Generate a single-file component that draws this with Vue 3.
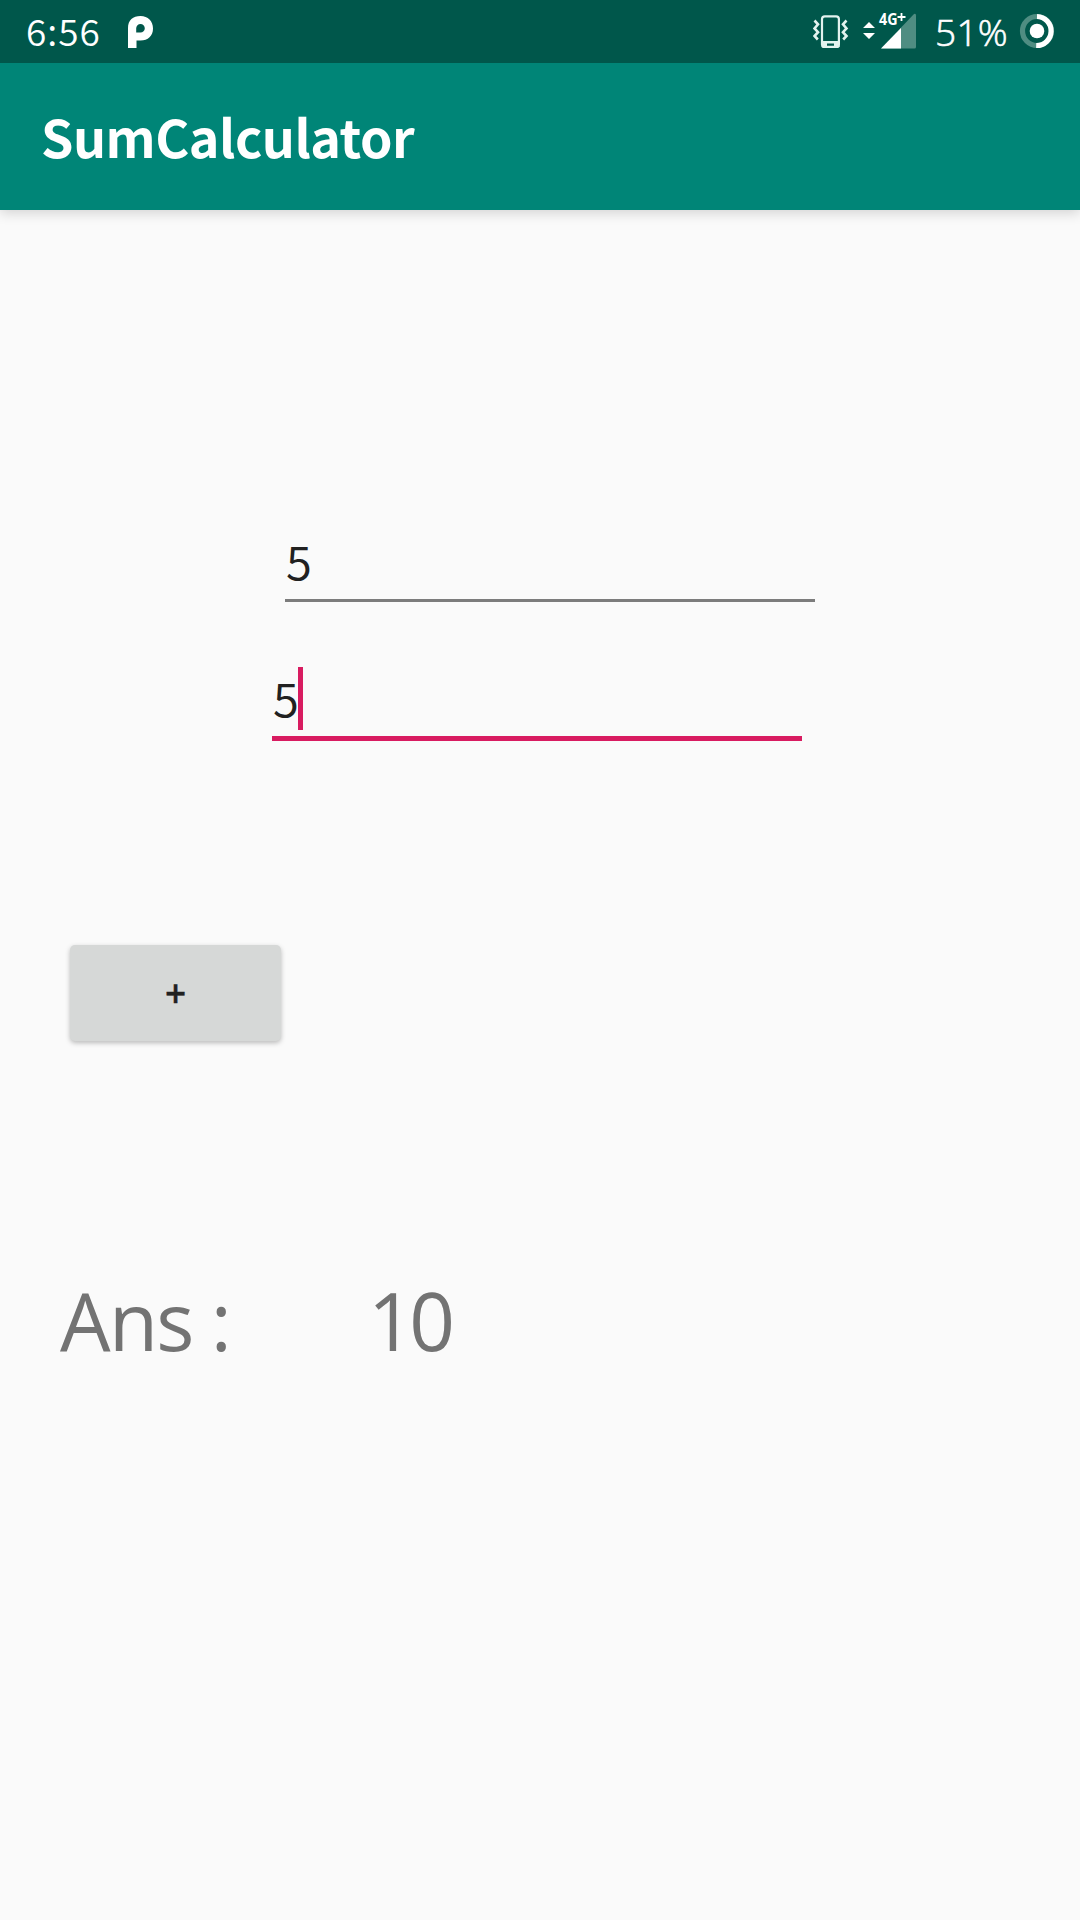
<script setup>
import { ref } from 'vue'

const time = ref('6:56')
const battery = ref('51%')
const first = ref('5')
const second = ref('5')
const answer = ref('10')
</script>

<template>
  <div class="screen">
    <header class="status">
      <span class="time">{{ time }}</span>
      <svg class="pinned" width="26" height="34" viewBox="0 0 26 34">
        <path fill="#fff" fill-rule="evenodd" d="M0 33V13C0 5 5 1 12.500 1S25 6 25 13.500 20 25.500 12.500 25.500H8.500V33ZM12.500 9A4.300 4.300 0 0 0 8.200 13.300V17.600H12.500A4.300 4.300 0 0 0 12.500 9Z" />
      </svg>
      <svg class="vibrate" width="36" height="36" viewBox="0 0 36 36">
        <rect x="9" y="4.300" width="16.900" height="31" rx="2.800" fill="none" stroke="#e3f3ef" stroke-width="2.200" />
        <path fill="#e3f3ef" fill-rule="evenodd" d="M9 29H26.500V35H9ZM14 31.500V33.700H21V31.500Z" />
        <path fill="none" stroke="#e3f3ef" stroke-width="2.600" d="M1.500 8.500L5 12.300 1.500 16.500 5 20.200 1.500 24 4.800 27.500M33.500 8.500L30 12.300 33.500 16.500 30 20.200 33.500 24 30.200 27.500" />
      </svg>
      <svg class="signal" width="54" height="44" viewBox="0 -6 54 44">
        <path fill="#fff" d="M0 16L6 10L12 16ZM0 21H12L6 27Z" />
        <path fill="#4f8d82" d="M18 36.500L51 2Q53 1 53 3.500V35Q53 36.500 51.500 36.500Z" />
        <path fill="#fff" d="M18 36.500L38 16V36.500Z" />
        <text class="net" x="16" y="13" textLength="18.500" lengthAdjust="spacingAndGlyphs">4G</text>
        <path stroke="#fff" stroke-width="1.800" d="M34.500 5H42.500M38.500 1V9" />
      </svg>
      <span class="battery">{{ battery }}</span>
      <svg class="ring" width="36" height="36" viewBox="0 0 36 36">
        <circle cx="18" cy="18" r="14.500" fill="none" stroke="#4f8d82" stroke-width="5.200" />
        <path fill="none" stroke="#fff" stroke-width="5.200" d="M18 3.500A14.500 14.500 0 0 1 17.200 32.500" />
        <circle cx="18" cy="18" r="7.300" fill="#fff" />
      </svg>
    </header>
    <div class="appbar"><h1>SumCalculator</h1></div>
    <main>
      <div class="field one"><span>{{ first }}</span></div>
      <div class="field two"><span>{{ second }}</span><i class="caret"></i></div>
      <button class="add">+</button>
      <div class="result">
        <span class="label">Ans :</span>
        <span class="value">{{ answer }}</span>
      </div>
    </main>
  </div>
</template>

<style>
body { margin: 0; background: #fafafa; }
</style>

<style scoped>
.screen {
  width: 1080px;
  height: 1920px;
  overflow: hidden;
  background: #fafafa;
  font-family: "Open Sans", "Noto Sans", sans-serif;
}
.status {
  position: relative;
  z-index: 1;
  display: flex;
  align-items: flex-start;
  height: 63px;
  background: #00574b;
  color: #fff;
  font-size: 37px;
  line-height: 63px;
}
.time {
  width: 102px;
  padding-left: 26px;
  font-family: "Noto Sans CJK SC", sans-serif;
  font-weight: 350;
  letter-spacing: 1px;
  line-height: 60px;
}
.pinned { margin-top: 15px; }
.vibrate { margin: 12px 0 0 659px; }
.signal { margin: 6px 0 0 14px; }
.net { font: 700 15.500px "Open Sans", sans-serif; fill: #fff; }
.battery {
  width: 84px;
  margin-left: 18px;
  font-weight: 300;
  letter-spacing: 0.3px;
  white-space: nowrap;
  -webkit-text-stroke: 0.6px #fff;
}
.ring { margin-top: 13px; }
.appbar {
  height: 147px;
  background: #008577;
  box-shadow: 0 3px 12px rgba(0, 0, 0, 0.16);
}
h1 {
  margin: 0;
  padding-left: 41px;
  color: #fff;
  font: 700 52px/145px "Noto Sans CJK SC", sans-serif;
  letter-spacing: -0.5px;
}
main {
  display: flex;
  flex-direction: column;
  align-items: flex-start;
}
.field {
  display: flex;
  box-sizing: border-box;
  width: 530px;
  color: #212121;
  font-family: "Noto Sans CJK SC", sans-serif;
  font-size: 47px;
  font-weight: 350;
  line-height: 59px;
}
.field span { width: 25px; margin-left: 1px; }
.one { height: 72px; margin: 320px 0 0 285px; border-bottom: 3px solid #7c7c7c; }
.two { height: 74px; margin: 65px 0 0 272px; border-bottom: 5px solid #d81b60; }
.caret { width: 5px; height: 63px; background: #d81b60; }
.add {
  width: 211px;
  height: 96px;
  margin: 204px 0 0 70px;
  padding: 0;
  border: 0;
  border-radius: 5px;
  background: #d6d8d7;
  box-shadow: 0 2px 5px rgba(0, 0, 0, 0.26);
  color: #212121;
  font: 600 37px/96px "Open Sans", sans-serif;
  -webkit-text-stroke: 0.4px #212121;
}
.result {
  display: flex;
  margin: 224px 0 0 60px;
  color: #737373;
  font-size: 80px;
  line-height: 109px;
}
.label { width: 308px; letter-spacing: -1.7px; word-spacing: -1px; }
.value { letter-spacing: -4.5px; }
</style>
